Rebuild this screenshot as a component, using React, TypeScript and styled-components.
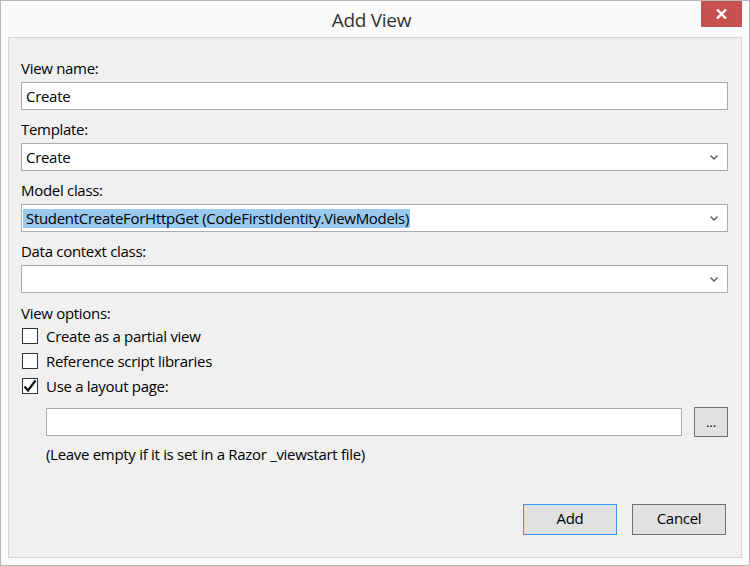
import React from "react";
import styled, { createGlobalStyle } from "styled-components";

const GlobalStyle = createGlobalStyle`
  html, body {
    margin: 0;
    padding: 0;
    background: #ffffff;
  }
  body {
    font-family: "Segoe UI", "Open Sans", "Noto Sans", sans-serif;
  }
`;

interface FieldProps {
  label: string;
  value?: string;
  dropdown?: boolean;
  selected?: boolean;
}

const Field: React.FC<FieldProps> = ({ label, value, dropdown, selected }) => (
  <FieldWrapper>
    <Label>{label}</Label>
    <TextBox>
      {selected ? <Selection>{value}</Selection> : <span>{value}</span>}
      {dropdown && (
        <Chevron width="8" height="5" viewBox="0 0 8 5">
          <path d="M0.5 0.5 L4 4 L7.5 0.5" fill="none" stroke="#555" strokeWidth="1.3" />
        </Chevron>
      )}
    </TextBox>
  </FieldWrapper>
);

interface CheckProps {
  label: string;
  checked?: boolean;
}

const CheckOption: React.FC<CheckProps> = ({ label, checked }) => (
  <CheckRow>
    <CheckBox>
      {checked && (
        <svg width="14" height="14" viewBox="0 0 14 14">
          <path d="M1.5 7.5 L5 11.5 L12.5 1.5" fill="none" stroke="#111" strokeWidth="2.2" />
        </svg>
      )}
    </CheckBox>
    <CheckLabel>{label}</CheckLabel>
  </CheckRow>
);

const App: React.FC = () => {
  return (
    <>
      <GlobalStyle />
      <Window>
        <TitleBar>
          <Title>Add View</Title>
          <CloseButton aria-label="Close">
            <svg width="11" height="10" viewBox="0 0 11 10">
              <path d="M1 0.5 L10 9.5 M10 0.5 L1 9.5" stroke="#fff" strokeWidth="2.4" />
            </svg>
          </CloseButton>
        </TitleBar>
        <Panel>
          <Field label="View name:" value="Create" />
          <Field label="Template:" value="Create" dropdown />
          <Field
            label="Model class:"
            value="StudentCreateForHttpGet (CodeFirstIdentity.ViewModels)"
            dropdown
            selected
          />
          <Field label="Data context class:" dropdown />
          <OptionsLabel>View options:</OptionsLabel>
          <CheckOption label="Create as a partial view" />
          <CheckOption label="Reference script libraries" />
          <CheckOption label="Use a layout page:" checked />
          <LayoutRow>
            <LayoutInput />
            <BrowseButton>...</BrowseButton>
          </LayoutRow>
          <Hint>(Leave empty if it is set in a Razor _viewstart file)</Hint>
          <Footer>
            <DialogButton primary>Add</DialogButton>
            <DialogButton>Cancel</DialogButton>
          </Footer>
        </Panel>
      </Window>
    </>
  );
};

export default App;

const Window = styled.div`
  width: 750px;
  height: 566px;
  box-sizing: border-box;
  border: 1px solid #b8b8b8;
  background: #fafafa;
  display: flex;
  flex-direction: column;
`;

const TitleBar = styled.div`
  height: 36px;
  flex-shrink: 0;
  display: grid;
  grid-template-columns: 1fr auto 1fr;
  padding-right: 7px;
`;

const Title = styled.div`
  grid-column: 2;
  font-size: 19px;
  letter-spacing: -0.3px;
  line-height: 38px;
  color: #333;
`;

const CloseButton = styled.button`
  grid-column: 3;
  justify-self: end;
  width: 41px;
  height: 26px;
  border: none;
  padding: 0;
  background: #c75050;
  display: flex;
  align-items: center;
  justify-content: center;
`;

const Panel = styled.div`
  flex: 1;
  margin: 0 7px 7px;
  border: 1px solid #d5d5d5;
  background: #f0f0f0;
  padding: 20px 13px 22px 12px;
  display: flex;
  flex-direction: column;
  font-size: 15px;
  letter-spacing: -0.3px;
  color: #000;
`;

const FieldWrapper = styled.div`
  display: flex;
  flex-direction: column;
  gap: 4px;
  margin-bottom: 9px;
`;

const Label = styled.div`
  line-height: 20px;
  height: 20px;
`;

const TextBox = styled.div`
  height: 28px;
  box-sizing: border-box;
  border: 1px solid #abadb3;
  background: #fff;
  display: flex;
  align-items: center;
  padding: 0 9px 0 4px;
  line-height: 19px;
`;

const Selection = styled.span`
  background: #99c9ef;
  margin-left: -3px;
  padding: 0 1px 0 3px;
  color: #000;
`;

const Chevron = styled.svg`
  margin-left: auto;
`;

const OptionsLabel = styled.div`
  line-height: 20px;
  height: 20px;
  margin-top: 1px;
`;

const CheckRow = styled.div`
  height: 25px;
  display: flex;
  align-items: center;
  gap: 8px;
  padding-left: 1px;
`;

const CheckBox = styled.div`
  width: 16px;
  height: 16px;
  box-sizing: border-box;
  border: 1px solid #333;
  background: #fff;
  display: flex;
  align-items: center;
  justify-content: center;
`;

const CheckLabel = styled.span`
  line-height: 20px;
`;

const LayoutRow = styled.div`
  display: flex;
  align-items: center;
  gap: 12px;
  margin: 9px 0 0 25px;
`;

const LayoutInput = styled.div`
  flex: 1;
  height: 28px;
  box-sizing: border-box;
  border: 1px solid #abadb3;
  background: #fff;
`;

const BrowseButton = styled.button`
  width: 34px;
  height: 30px;
  box-sizing: border-box;
  border: 1px solid #707070;
  background: #e1e1e1;
  font-family: inherit;
  font-size: 13px;
  color: #000;
  padding: 0;
`;

const Hint = styled.div`
  margin: 7px 0 0 25px;
  line-height: 20px;
`;

const Footer = styled.div`
  margin-top: auto;
  display: flex;
  justify-content: flex-end;
  gap: 15px;
  padding-right: 2px;
`;

const DialogButton = styled.button<{ primary?: boolean }>`
  width: 94px;
  height: 31px;
  box-sizing: border-box;
  border: 1px solid ${({ primary }) => (primary ? "#3399ff" : "#707070")};
  background: #e1e1e1;
  font-family: inherit;
  font-size: 15px;
  letter-spacing: -0.3px;
  color: #000;
  padding: 0 0 3px;
`;
